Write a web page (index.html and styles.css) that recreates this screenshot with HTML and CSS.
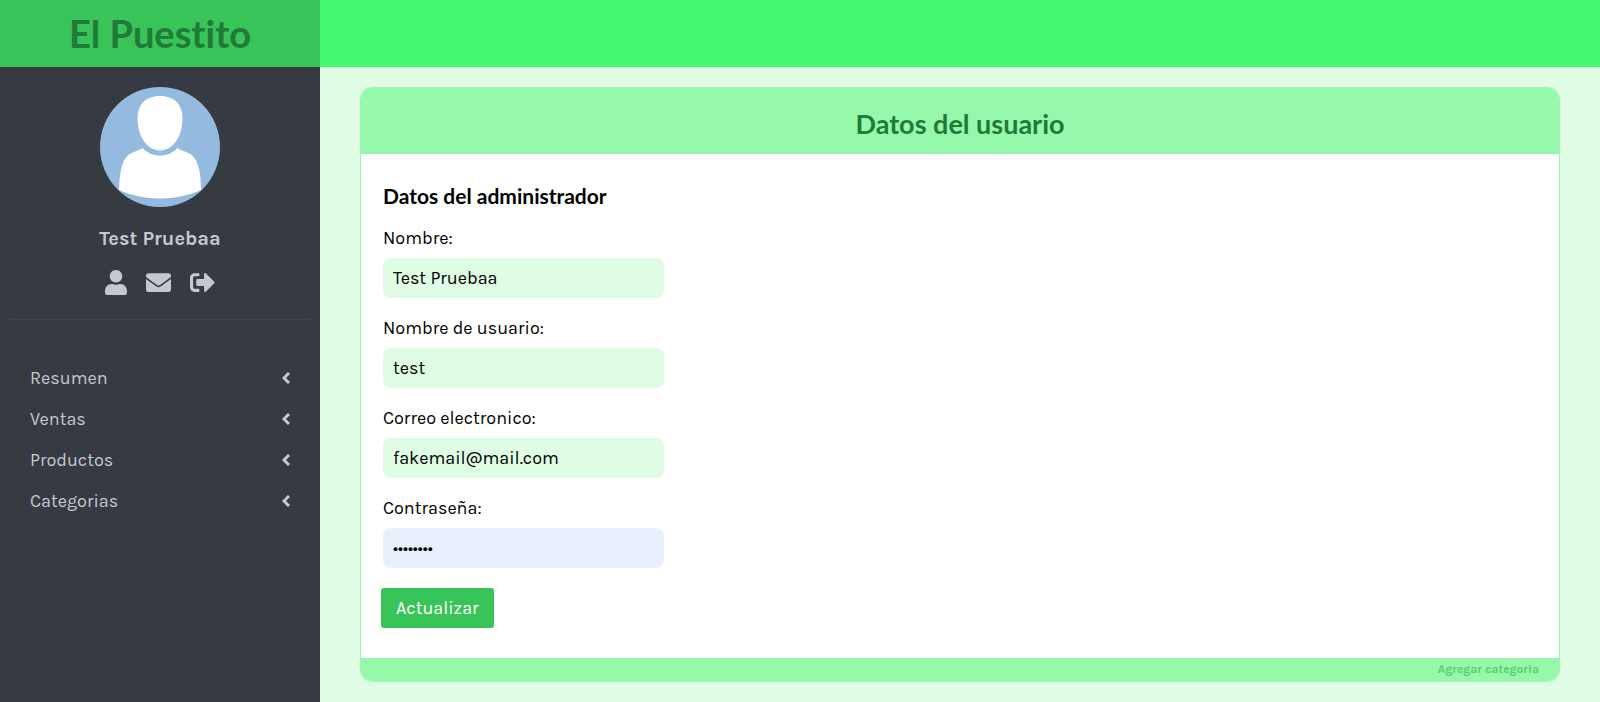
FILE: index.html
```
<!DOCTYPE html>
<html lang="es">
<head>
<meta charset="utf-8">
<meta name="viewport" content="width=device-width, initial-scale=1">
<title>El Puestito</title>
<link rel="stylesheet" href="styles.css">
</head>
<body>
<div class="layout">
  <aside class="sidebar">
    <h1 class="brand">El Puestito</h1>
    <section class="profile">
      <svg class="avatar" viewBox="0 0 120 120" aria-hidden="true">
        <circle cx="60" cy="60" r="60" fill="#95badf"/>
        <path fill="#fff" d="M60 9C75 9 82.500 18 82.500 32C82.500 49 73 63.500 60 63.500S37.500 49 37.500 32C37.500 18 45 9 60 9Z"/>
        <path fill="#fff" d="M42.500 61C47 66 53 68.500 60 68.500S73 66 77.500 61C81 64 87 64.500 91 67.500C99 73 101 88 101 103C88 108.500 75 111.500 60 111.500S32 108.500 19 103C19.500 88 21 73 29 67.500C33 64.500 39 64 42.500 61Z"/>
      </svg>
      <p class="profile-name">Test Pruebaa</p>
      <div class="profile-links">
        <a href="#" aria-label="Perfil"><svg class="icon icon-user" viewBox="0 0 448 512"><path d="M224 256c70.700 0 128-57.300 128-128S294.700 0 224 0 96 57.300 96 128s57.300 128 128 128zm89.600 32h-16.700c-22.200 10.200-46.900 16-72.900 16s-50.600-5.800-72.900-16h-16.700C60.200 288 0 348.200 0 422.400V464c0 26.500 21.500 48 48 48h352c26.500 0 48-21.500 48-48v-41.600c0-74.200-60.200-134.400-134.400-134.400z"/></svg></a>
        <a href="#" aria-label="Mensajes"><svg class="icon" viewBox="0 0 512 512"><path d="M502.300 190.800c3.900-3.100 9.700-.2 9.700 4.700V400c0 26.500-21.500 48-48 48H48c-26.500 0-48-21.500-48-48V195.600c0-5 5.700-7.800 9.700-4.700 22.400 17.400 52.100 39.500 154.100 113.600 21.100 15.400 56.700 47.800 92.200 47.600 35.700.3 72-32.800 92.300-47.600 102-74.100 131.600-96.300 154-113.700zM256 320c23.200.4 56.600-29.200 73.400-41.400 132.700-96.300 142.800-104.700 173.400-128.700 5.800-4.500 9.200-11.500 9.200-18.900v-19c0-26.500-21.500-48-48-48H48c-26.500 0-48 21.500-48 48v19c0 7.400 3.400 14.300 9.200 18.900 30.600 23.900 40.700 32.400 173.400 128.700 16.800 12.200 50.200 41.800 73.400 41.400z"/></svg></a>
        <a href="#" aria-label="Salir"><svg class="icon" viewBox="0 0 512 512"><path d="M497 273L329 441c-15 15-41 4.500-41-17v-96H152c-13.300 0-24-10.700-24-24v-96c0-13.300 10.700-24 24-24h136V88c0-21.400 25.900-32 41-17l168 168c9.300 9.400 9.300 24.600 0 34zM192 436v-40c0-6.600-5.400-12-12-12H96c-17.700 0-32-14.300-32-32V160c0-17.700 14.300-32 32-32h84c6.600 0 12-5.400 12-12V76c0-6.600-5.400-12-12-12H96c-53 0-96 43-96 96v192c0 53 43 96 96 96h84c6.600 0 12-5.400 12-12z"/></svg></a>
      </div>
    </section>
    <nav class="menu">
      <a class="menu-item" href="#">Resumen <svg class="chevron" viewBox="0 0 8 12"><path d="M7 1L2 6l5 5"/></svg></a>
      <a class="menu-item" href="#">Ventas <svg class="chevron" viewBox="0 0 8 12"><path d="M7 1L2 6l5 5"/></svg></a>
      <a class="menu-item" href="#">Productos <svg class="chevron" viewBox="0 0 8 12"><path d="M7 1L2 6l5 5"/></svg></a>
      <a class="menu-item" href="#">Categorias <svg class="chevron" viewBox="0 0 8 12"><path d="M7 1L2 6l5 5"/></svg></a>
    </nav>
  </aside>
  <div class="page">
    <header class="topbar"></header>
    <main class="content">
      <section class="card">
        <h2 class="card-header">Datos del usuario</h2>
        <form class="card-body">
          <h3 class="form-title">Datos del administrador</h3>
          <div class="field">
            <label for="nombre">Nombre:</label>
            <input id="nombre" type="text" value="Test Pruebaa">
          </div>
          <div class="field">
            <label for="usuario">Nombre de usuario:</label>
            <input id="usuario" type="text" value="test">
          </div>
          <div class="field">
            <label for="correo">Correo electronico:</label>
            <input id="correo" type="email" value="fakemail@mail.com">
          </div>
          <div class="field">
            <label for="clave">Contraseña:</label>
            <input id="clave" class="filled" type="password" value="password">
          </div>
          <button class="submit" type="button">Actualizar</button>
        </form>
        <footer class="card-footer">Agregar categoria</footer>
      </section>
    </main>
  </div>
</div>
</body>
</html>
```
FILE: styles.css
```
* {
  box-sizing: border-box;
}

body {
  margin: 0;
  font-family: Karla, Roboto, sans-serif;
  font-size: 18px;
  line-height: 20px;
  color: #000;
  background: #dffde4;
}

h1, h2, h3, p {
  margin: 0;
}

h1, h2, h3 {
  font-family: Lato, sans-serif;
  font-weight: 700;
  font-variant-ligatures: none;
}

.layout {
  display: grid;
  grid-template-columns: 20% 1fr;
  min-height: 100vh;
}

.sidebar {
  background: #363a41;
  color: #c4c8d0;
}

.brand {
  height: 67px;
  font-size: 38px;
  line-height: 67px;
  text-align: center;
  color: #217a37;
  background: #38c458;
}

.profile {
  display: flex;
  flex-direction: column;
  align-items: center;
  margin: 0 10px;
  padding: 20px 0 24px;
  border-bottom: 1px solid #424549;
}

.avatar {
  width: 120px;
  height: 120px;
}

.profile-name {
  margin-top: 22px;
  font-size: 20px;
  font-weight: 700;
}

.profile-links {
  display: flex;
  gap: 19px;
  margin-top: 21px;
}

.profile-links a {
  display: flex;
  color: inherit;
}

.icon {
  width: 25px;
  height: 25px;
  fill: currentColor;
}

.icon-user {
  width: 22px;
}

.menu {
  display: flex;
  flex-direction: column;
  padding: 37px 30px;
}

.menu-item {
  display: flex;
  align-items: center;
  justify-content: space-between;
  height: 41px;
  color: inherit;
  text-decoration: none;
}

.chevron {
  width: 8px;
  height: 12px;
  fill: none;
  stroke: currentColor;
  stroke-width: 3;
}

.topbar {
  height: 67px;
  background: #45f76f;
}

.content {
  padding: 20px 40px;
}

.card {
  overflow: hidden;
  border: 1px solid #95f8aa;
  border-radius: 12px;
  background: #fff;
}

.card-header {
  padding: 20px 0 14px;
  font-size: 27px;
  line-height: 32px;
  text-align: center;
  color: #217a37;
  background: #95f8aa;
}

.card-body {
  display: flex;
  flex-direction: column;
  align-items: flex-start;
  padding: 30px 20px;
}

.form-title {
  margin: 0 2px 20px;
  font-size: 21px;
  line-height: 24px;
}

.field {
  display: flex;
  flex-direction: column;
  gap: 10px;
  width: 281px;
  max-width: 100%;
  margin: 0 2px 20px;
}

.field input {
  width: 100%;
  height: 40px;
  padding: 0 10px;
  border: 0;
  border-radius: 8px;
  font: inherit;
  color: #000;
  background: #dffde4;
}

.field .filled {
  background: #e8f0fe;
}

.submit {
  height: 40px;
  padding: 0 15px;
  border: 0;
  border-radius: 3px;
  font: inherit;
  color: #fff;
  background: #38c458;
}

.card-footer {
  padding: 1px 20px 2px;
  font-size: 12px;
  font-weight: 700;
  text-align: right;
  color: #5bcc75;
  background: #95f8aa;
}
```
